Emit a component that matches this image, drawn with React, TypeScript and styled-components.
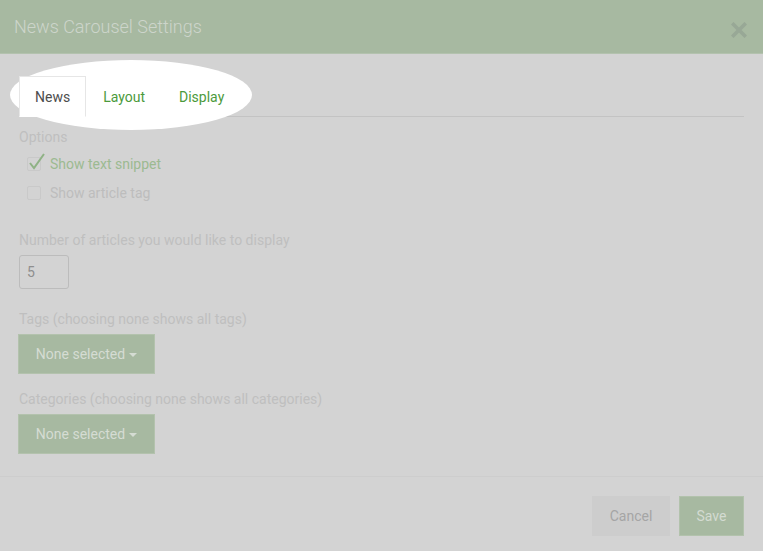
import React from "react";
import styled, { createGlobalStyle } from "styled-components";

const Global = createGlobalStyle`
  html, body { margin: 0; padding: 0; background: #d3d3d3; }
  body { font-family: Roboto, "Liberation Sans", Arial, sans-serif; }
  * { box-sizing: border-box; }
`;

const Modal = styled.div`
  width: 763px;
  height: 551px;
  display: flex;
  flex-direction: column;
  background: #d3d3d3;
  overflow: hidden;
`;

const Header = styled.header`
  height: 54px;
  flex: none;
  background: #a7b9a1;
  border-bottom: 1px solid #b3c2ae;
  display: flex;
  align-items: center;
  justify-content: space-between;
  padding: 0 14px 0 14px;
`;

const Title = styled.h1`
  margin: 0;
  font-size: 18px;
  font-weight: 300;
  color: #cdd5cb;
`;

const Close = styled.button`
  border: 0;
  background: transparent;
  padding: 0;
  width: 16px;
  height: 16px;
  margin-top: 6px;
  margin-right: 2px;
  display: flex;
`;

const Body = styled.div`
  padding: 22px 19px 22px 19px;
  border-bottom: 1px solid #cdcdcd;
  display: flex;
  flex-direction: column;
`;

const TabBar = styled.nav`
  position: relative;
  display: flex;
  height: 41px;
  border-bottom: 1px solid rgba(0, 0, 0, 0.075);
`;

const Spotlight = styled.div`
  position: absolute;
  left: -9px;
  top: -16px;
  width: 242px;
  height: 70px;
  border-radius: 50%;
  background: #ffffff;
  z-index: 0;
`;

const Tab = styled.div<{ $active?: boolean }>`
  position: relative;
  z-index: 1;
  height: 41px;
  padding: 0 ${(p) => (p.$active ? "15px" : "16px")};
  display: flex;
  align-items: center;
  font-size: 14px;
  color: ${(p) => (p.$active ? "#4d4d4d" : "#4c9a3c")};
  background: ${(p) => (p.$active ? "#ffffff" : "transparent")};
  border: 1px solid ${(p) => (p.$active ? "#e6e6e6" : "transparent")};
  border-bottom-color: ${(p) => (p.$active ? "#ffffff" : "transparent")};
  margin-bottom: -1px;
`;

const Label = styled.div<{ $mt: number }>`
  margin-top: ${(p) => p.$mt}px;
  font-size: 14px;
  line-height: 20px;
  color: #bfbfbf;
`;

const CheckRow = styled.label<{ $mt: number; $on?: boolean }>`
  margin-top: ${(p) => p.$mt}px;
  display: flex;
  align-items: center;
  height: 20px;
  padding-left: 8px;
  font-size: 14px;
  color: ${(p) => (p.$on ? "#9cba91" : "#bdbdbd")};
`;

const Box = styled.span`
  position: relative;
  width: 14px;
  height: 14px;
  border: 1px solid #c9c9c9;
  border-radius: 2px;
  margin-right: 9px;
  flex: none;
`;

const Tick = styled.svg`
  position: absolute;
  left: 0px;
  top: -5px;
`;

const NumberInput = styled.div`
  margin-top: 5px;
  width: 50px;
  height: 34px;
  border: 1px solid #bcbcbc;
  border-radius: 3px;
  display: flex;
  align-items: center;
  padding-left: 7px;
  font-size: 14px;
  color: #8f8f8f;
`;

const Dropdown = styled.button`
  margin-top: 5px;
  margin-left: -1px;
  width: 137px;
  height: 40px;
  border: 1px solid #b3c2ad;
  background: #a7b9a1;
  color: #d5dcd3;
  font-family: inherit;
  font-size: 14px;
  display: flex;
  align-items: center;
  justify-content: center;
  gap: 4px;
  padding: 0;
`;

const Caret = styled.span`
  width: 0;
  height: 0;
  border-left: 4px solid transparent;
  border-right: 4px solid transparent;
  border-top: 4px solid #d5dcd3;
  margin-top: 2px;
`;

const Footer = styled.footer`
  display: flex;
  justify-content: flex-end;
  gap: 9px;
  padding: 19px 19px 0 0;
`;

const FootButton = styled.button<{ $primary?: boolean }>`
  height: 40px;
  width: ${(p) => (p.$primary ? "65px" : "78px")};
  padding: 0;
  font-family: inherit;
  font-size: 14px;
  border: 1px solid ${(p) => (p.$primary ? "#b2c2ac" : "#cdcdcd")};
  background: ${(p) => (p.$primary ? "#a7b9a1" : "#cdcdcd")};
  color: ${(p) => (p.$primary ? "#d3dbd1" : "#a5a5a5")};
`;

export default function App() {
  return (
    <>
      <Global />
      <Modal>
        <Header>
          <Title>News Carousel Settings</Title>
          <Close aria-label="Close">
            <svg width="16" height="16" viewBox="0 0 16 16">
              <path d="M2.5 2.5 L13.5 13.5 M13.5 2.5 L2.5 13.5" stroke="#98a896" strokeWidth="3.6" strokeLinecap="square" />
            </svg>
          </Close>
        </Header>
        <Body>
          <TabBar>
            <Spotlight />
            <Tab $active>News</Tab>
            <Tab>Layout</Tab>
            <Tab>Display</Tab>
          </TabBar>
          <Label $mt={10}>Options</Label>
          <CheckRow $mt={7} $on>
            <Box>
              <Tick width="18" height="18" viewBox="0 0 18 18">
                <path d="M2 10 L6 15 L16 1" fill="none" stroke="#8fb285" strokeWidth="2" />
              </Tick>
            </Box>
            Show text snippet
          </CheckRow>
          <CheckRow $mt={9}>
            <Box />
            Show article tag
          </CheckRow>
          <Label $mt={27}>Number of articles you would like to display</Label>
          <NumberInput>5</NumberInput>
          <Label $mt={20}>Tags (choosing none shows all tags)</Label>
          <Dropdown>
            None selected <Caret />
          </Dropdown>
          <Label $mt={15}>Categories (choosing none shows all categories)</Label>
          <Dropdown>
            None selected <Caret />
          </Dropdown>
        </Body>
        <Footer>
          <FootButton>Cancel</FootButton>
          <FootButton $primary>Save</FootButton>
        </Footer>
      </Modal>
    </>
  );
}
